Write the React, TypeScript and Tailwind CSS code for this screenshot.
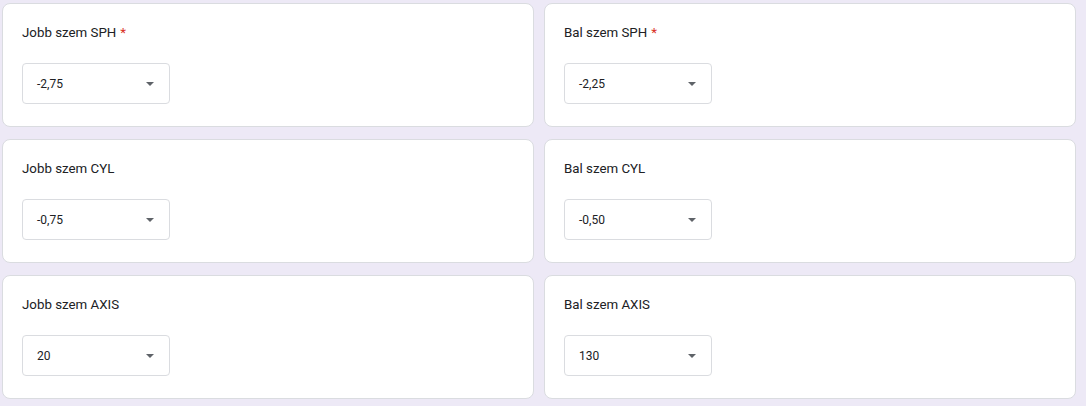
import React from "react";

type Field = { label: string; value: string; required?: boolean };

const fields: Field[] = [
  { label: "Jobb szem SPH", value: "-2,75", required: true },
  { label: "Bal szem SPH", value: "-2,25", required: true },
  { label: "Jobb szem CYL", value: "-0,75" },
  { label: "Bal szem CYL", value: "-0,50" },
  { label: "Jobb szem AXIS", value: "20" },
  { label: "Bal szem AXIS", value: "130" },
];

function Card({ f }: { f: Field }) {
  return (
    <div className="h-[124px] rounded-[8px] border border-[#dadce0] bg-white pl-[19px] pt-[19px]">
      <div className="h-[20px] text-[13.3px] leading-[20px] text-[#202124]">
        {f.label}
        {f.required && <span className="ml-[4px] text-[#d93025]">*</span>}
      </div>
      <div className="mt-[20px] flex h-[41px] w-[148px] items-center justify-between rounded-[4px] border border-[#dadce0] pl-[14px] pr-[15px]">
        <span className="text-[12px] leading-[16px] text-[#202124]">{f.value}</span>
        <svg width="8" height="4" viewBox="0 0 8 4" className="mt-[1px]">
          <path d="M0 0 L8 0 L4 4 Z" fill="#5f6368" />
        </svg>
      </div>
    </div>
  );
}

export default function App() {
  return (
    <div
      className="h-[406px] w-[1086px] bg-[#ede9f6] pl-[2px] pr-[10px] pt-[3px]"
      style={{ fontFamily: "Roboto, 'Liberation Sans', sans-serif" }}
    >
      <div className="grid grid-cols-2 gap-x-[10px] gap-y-[12px]">
        {fields.map((f) => (
          <Card key={f.label} f={f} />
        ))}
      </div>
    </div>
  );
}
